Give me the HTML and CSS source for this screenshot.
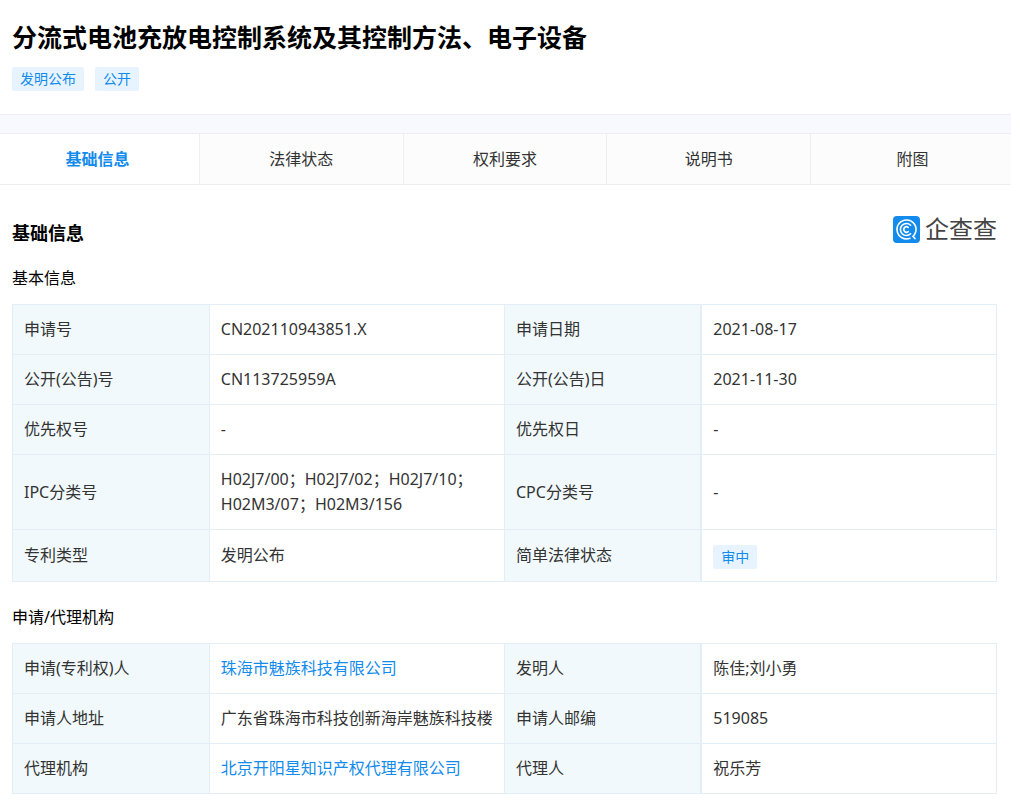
FILE: index.html
```html
<!DOCTYPE html>
<html lang="zh-CN">
<head>
    <meta charset="UTF-8">
    <meta name="viewport" content="width=device-width, initial-scale=1.0">
    <title>分流式电池充放电控制系统及其控制方法、电子设备</title>
    <link rel="stylesheet" href="styles.css">
</head>
<body>
    <header class="patent-header">
        <h1 class="patent-title">分流式电池充放电控制系统及其控制方法、电子设备</h1>
        <div class="tags">
            <span class="tag">发明公布</span>
            <span class="tag">公开</span>
        </div>
    </header>

    <div class="tab-bar">
        <nav class="tabs">
            <a class="tab active" href="#basic">基础信息</a>
            <a class="tab" href="#legal">法律状态</a>
            <a class="tab" href="#claims">权利要求</a>
            <a class="tab" href="#description">说明书</a>
            <a class="tab" href="#drawings">附图</a>
        </nav>
    </div>

    <main class="content" id="basic">
        <div class="section-head">
            <h2 class="section-title">基础信息</h2>
            <div class="logo">
                <svg class="logo-icon" viewBox="0 0 27 27" aria-hidden="true">
                    <rect width="27" height="27" rx="4" fill="#128bed"/>
                    <g fill="none" stroke="#fff" stroke-linecap="round">
                        <path d="M17 22.3A9.5 9.5 0 1 1 22.8 15.5Q22 18.6 20 20.3L22 22.6" stroke-width="1.6"/>
                        <path d="M17.6 9.2A6 6 0 1 0 17.6 17.8" stroke-width="1.6"/>
                        <path d="M15.2 11.4A2.7 2.7 0 1 0 15.2 15.6" stroke-width="1.6"/>
                    </g>
                </svg>
                <span class="logo-text">企查查</span>
            </div>
        </div>

        <h3 class="table-title">基本信息</h3>
        <table class="info-table">
            <tr>
                <th>申请号</th>
                <td>CN202110943851.X</td>
                <th>申请日期</th>
                <td>2021-08-17</td>
            </tr>
            <tr>
                <th>公开(公告)号</th>
                <td>CN113725959A</td>
                <th>公开(公告)日</th>
                <td>2021-11-30</td>
            </tr>
            <tr>
                <th>优先权号</th>
                <td>-</td>
                <th>优先权日</th>
                <td>-</td>
            </tr>
            <tr>
                <th>IPC分类号</th>
                <td>H02J7/00；H02J7/02；H02J7/10；<br>H02M3/07；H02M3/156</td>
                <th>CPC分类号</th>
                <td>-</td>
            </tr>
            <tr>
                <th>专利类型</th>
                <td>发明公布</td>
                <th>简单法律状态</th>
                <td><span class="tag status">审中</span></td>
            </tr>
        </table>

        <h3 class="table-title">申请/代理机构</h3>
        <table class="info-table">
            <tr>
                <th>申请(专利权)人</th>
                <td><a class="link" href="#">珠海市魅族科技有限公司</a></td>
                <th>发明人</th>
                <td>陈佳;刘小勇</td>
            </tr>
            <tr>
                <th>申请人地址</th>
                <td>广东省珠海市科技创新海岸魅族科技楼</td>
                <th>申请人邮编</th>
                <td>519085</td>
            </tr>
            <tr>
                <th>代理机构</th>
                <td><a class="link" href="#">北京开阳星知识产权代理有限公司</a></td>
                <th>代理人</th>
                <td>祝乐芳</td>
            </tr>
        </table>
    </main>
</body>
</html>
```
FILE: styles.css
```css
* {
    box-sizing: border-box;
}

body {
    margin: 0;
    background: #fff;
    color: #333;
    font-family: "Noto Sans", "Noto Sans CJK SC", sans-serif;
    font-size: 16px;
    line-height: 25px;
}

a {
    text-decoration: none;
}

.link {
    color: #128bed;
}

.patent-header {
    padding: 19px 12px 23px;
}

.patent-title {
    margin: 0 0 12px;
    color: #000;
    font-size: 25px;
    font-weight: bold;
    line-height: 36px;
}

.tags {
    display: flex;
    gap: 11px;
}

.tag {
    padding: 0 8px;
    border-radius: 2px;
    background: #e7f4ff;
    color: #128bed;
    font-size: 14px;
    line-height: 24px;
}

/* tabs */
.tab-bar {
    overflow: hidden;
    padding-top: 18px;
    border-top: 1px solid #eee;
    background: #f8f9fe;
}

.tabs {
    display: flex;
    margin: 0 -4px;
    border-top: 1px solid #eee;
    border-bottom: 1px solid #eee;
}

.tab {
    flex: 1;
    height: 50px;
    border-right: 1px solid #eee;
    background: #fcfcfc;
    color: #333;
    line-height: 50px;
    text-align: center;
}

.tab.active {
    background: #fff;
    color: #128bed;
    font-weight: bold;
}

.content {
    padding: 30px 14px 16px 12px;
}

.section-head {
    display: flex;
    justify-content: space-between;
    height: 36px;
}

.section-title {
    margin: 0;
    color: #000;
    font-size: 18px;
    line-height: 36px;
}

.logo {
    display: flex;
    align-items: center;
    gap: 5px;
    height: 28px;
}

.logo-icon {
    width: 27px;
    height: 27px;
}

.logo-text {
    color: #444;
    font-size: 24px;
    line-height: 28px;
}

.table-title {
    margin: 15px 0 14px;
    color: #000;
    font-size: 16px;
    font-weight: normal;
    line-height: 24px;
}

.info-table {
    width: 100%;
    border-collapse: collapse;
    table-layout: fixed;
}

.info-table + .table-title {
    margin-top: 23px;
}

.info-table th,
.info-table td {
    padding: 12px 11px;
    border: 1px solid #e4eef6;
    text-align: left;
    vertical-align: middle;
}

.info-table th {
    width: 20%;
    background: #f1f9fc;
    font-weight: normal;
}

.info-table td {
    width: 30%;
}

.info-table td:last-child {
    border-left-width: 2px;
}

.status {
    display: inline-block;
    margin-top: 2px;
    vertical-align: middle;
}
```
